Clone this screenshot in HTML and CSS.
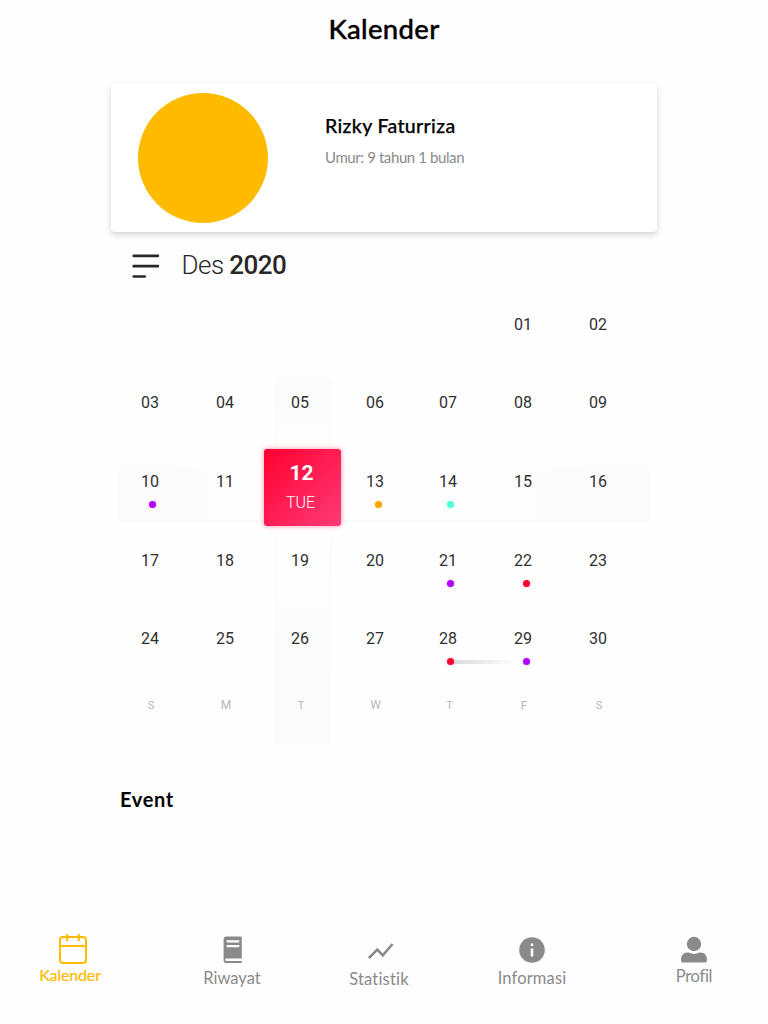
FILE: index.html
```html
<!DOCTYPE html>
<html lang="id">
<head>
<meta charset="utf-8">
<title>Kalender</title>
<link rel="stylesheet" href="styles.css">
</head>
<body>
<div class="app">
  <header class="topbar"><h1 class="title">Kalender</h1></header>
  <main class="content">
    <section class="profile">
      <div class="avatar"></div>
      <div class="person">
        <h2 class="name">Rizky Faturriza</h2>
        <p class="age">Umur: 9 tahun 1 bulan</p>
      </div>
    </section>
    <div class="month">
      <svg class="menu" width="28" height="26" viewBox="0 0 28 26"><path d="M1.700 2.800h24.200M1.700 13.200h24.200M1.700 23.500h11" fill="none" stroke="#282828" stroke-width="2.700" stroke-linecap="round"/></svg>
      <h2 class="month-name">Des <b class="year">2020</b></h2>
    </div>
    <section class="calendar">
      <div class="band band-week"></div>
      <div class="band band-day"></div>
      <div class="day first">01</div><div class="day">02</div>
      <div class="day">03</div><div class="day">04</div><div class="day">05</div><div class="day">06</div><div class="day thu">07</div><div class="day">08</div><div class="day">09</div>
      <div class="day">10<i class="dot purple"></i></div><div class="day">11</div>
      <div class="selected"><b class="selected-date">12</b><span class="selected-name">TUE</span></div>
      <div class="day">13<i class="dot orange"></i></div><div class="day thu">14<i class="dot aqua"></i></div><div class="day">15</div><div class="day">16</div>
      <div class="day">17</div><div class="day">18</div><div class="day">19</div><div class="day">20</div><div class="day thu">21<i class="dot purple"></i></div><div class="day">22<i class="dot red fri"></i></div><div class="day">23</div>
      <div class="day">24</div><div class="day">25</div><div class="day">26</div><div class="day">27</div><div class="day thu">28<i class="dot red range"></i></div><div class="day">29<i class="dot purple fri"></i></div><div class="day">30</div>
      <div class="weekday">S</div><div class="weekday wide">M</div><div class="weekday">T</div><div class="weekday wide">W</div><div class="weekday">T</div><div class="weekday eff">F</div><div class="weekday">S</div>
    </section>
    <h2 class="event">Event</h2>
  </main>
  <nav class="tabs">
    <a class="tab active">
      <svg class="tab-icon" width="30" height="32" viewBox="0 0 30 32" fill="none" stroke="#ffbb00" stroke-width="2"><rect x="2" y="4" width="26" height="26" rx="3"/><path d="M2 13h26M9.200 1v7M20.800 1v7"/></svg>
      <span class="label">Kalender</span>
    </a>
    <a class="tab riwayat">
      <svg class="tab-icon" width="20" height="28" viewBox="0 0 20 28"><path fill="#8a8a8a" fill-rule="evenodd" d="M3 .5h14.800q1 0 1 1v21H3.500q-1.300 0-1.300 1.300t1.300 1.300h15.300v2H3.300Q.6 27.100.6 24.300V3Q.6.5 3 .5ZM3.700 4.300v2.200h12.600V4.300ZM3.700 9v2.200h12.600V9Z"/></svg>
      <span class="label">Riwayat</span>
    </a>
    <a class="tab statistik">
      <svg class="tab-icon" width="28" height="20" viewBox="0 0 28 20"><path d="m1.800 17.200 8.500-8.500 5.500 5.600L25.500 3" fill="none" stroke="#8a8a8a" stroke-width="2.600"/></svg>
      <span class="label">Statistik</span>
    </a>
    <a class="tab informasi">
      <svg class="tab-icon" width="28" height="28" viewBox="0 0 28 28"><circle cx="14" cy="14" r="12.800" fill="#8a8a8a"/><path fill="#fefefe" d="M12.700 7.500h2.600v2.600h-2.600zM12.700 12.600h2.600v7.800h-2.600z"/></svg>
      <span class="label">Informasi</span>
    </a>
    <a class="tab profil">
      <svg class="tab-icon" width="28" height="28" viewBox="0 0 28 28" fill="#8a8a8a"><circle cx="14" cy="8" r="7.200"/><path d="M7.500 16.600h1.200q2.400 1.300 5.300 1.300t5.300-1.300h1.200q6.500.4 6.500 7.400 0 2.600-2.500 2.600h-21Q1 26.600 1 24q0-7 6.500-7.400Z"/></svg>
      <span class="label">Profil</span>
    </a>
  </nav>
</div>
</body>
</html>
```

FILE: styles.css
```css
* { box-sizing: border-box; margin: 0; padding: 0; }
body { background: #fefefe; font-family: Lato, "Open Sans", sans-serif; color: #000; font-variant-ligatures: none; }
.app { width: 768px; height: 1024px; display: flex; flex-direction: column; overflow: hidden; }
.topbar { height: 84px; padding-top: 11px; text-align: center; }
.title { font: 500 27.5px/36px Lato, sans-serif; letter-spacing: .3px; -webkit-text-stroke: .4px #000; }
.content { width: 546px; margin-left: 111px; height: 848px; }
.profile { height: 148px; display: flex; padding: 9px 27px; background: #fff; border-radius: 4px; box-shadow: 0 3px 6px rgba(0,0,0,.16); }
.avatar { width: 130px; height: 130px; border-radius: 50%; background: #ffbb00; }
.person { margin-left: 57px; padding-top: 20px; }
.name { font-size: 19.5px; line-height: 26px; font-weight: 500; letter-spacing: .35px; white-space: nowrap; -webkit-text-stroke: .25px #000; }
.age { margin-top: 8px; font-size: 15px; line-height: 20px; letter-spacing: -.4px; color: #8a8a8a; white-space: nowrap; }
.month { display: flex; height: 55px; padding: 21px 0 0 21px; }
.menu { flex: none; }
.month-name { margin: -5px 0 0 21.500px; font: 300 26px/34px Roboto, sans-serif; letter-spacing: -.55px; color: #282828; white-space: nowrap; }
.year { font-weight: 500; }
.calendar { position: relative; display: grid; width: 524px; margin-left: 1px; grid-template-columns: 75px 75px 75px 74px 74px 75px 75px; grid-template-rows: 78px 79px 79px 78px 79px 80px; font: 400 16px/20px Roboto, sans-serif; color: #303030; }
.band { position: absolute; }
.band-week { left: 9px; top: 180px; width: 526px; height: 53px; background: linear-gradient(90deg, #fbfbfb, #fefefe 35% 58%, #fbfbfb); box-shadow: 0 1px 4px rgba(0,0,0,.035); }
.band-day { left: 164px; top: 92px; width: 54px; height: 366px; background: linear-gradient(#fbfbfb, #fefefe 25% 45%, #fbfbfb 80%); box-shadow: 0 0 4px rgba(0,0,0,.03); }
.day { position: relative; padding: 28px 0 0 29px; }
.thu { padding-left: 28px; }
.first { grid-column: 6; }
.dot { display: block; width: 7px; height: 7px; margin: 9px 0 0 8px; border-radius: 50%; }
.thu .dot { margin-left: 8px; }
.orange, .fri { margin-left: 9px; }
.purple { background: #b000ff; box-shadow: 0 0 3px rgba(176,0,255,.3); }
.orange { background: #ffa500; box-shadow: 0 0 3px rgba(255,165,0,.3); }
.aqua { background: #4fffd5; box-shadow: 0 0 3px rgba(79,255,213,.4); }
.red { background: #ff0030; box-shadow: 0 0 3px rgba(255,0,48,.3); }
.range::after { content: ""; position: absolute; z-index: -1; left: 40px; top: 59px; width: 64px; height: 4px; background: linear-gradient(90deg, #d8d8d8, #fefefe); }
.selected { position: relative; width: 77px; height: 77px; margin: 5px 0 0 2px; padding-top: 10px; display: flex; flex-direction: column; text-align: center; color: #fff; border-radius: 3px; background: linear-gradient(135deg, #ff0030, #ff3b78); box-shadow: 0 0 5px rgba(255,0,60,.45); }
.selected-date { font-size: 21px; line-height: 28px; padding-right: 2px; }
.selected-name { margin-top: 6px; padding-right: 4px; font-size: 16px; font-weight: 300; }
.weekday { position: relative; padding: 16px 0 0 3px; text-align: center; font-size: 11px; color: #b8b8b8; }
.wide { padding-top: 15px; font-size: 12px; }
.eff { font-size: 12px; }
.event { margin: 26px 0 0 9px; font: 700 20px/26px Lato, sans-serif; letter-spacing: .65px; }
.tabs { display: flex; height: 92px; align-items: flex-start; padding-left: 39px; }
.tab { display: flex; flex: none; flex-direction: column; align-items: center; color: #8a8a8a; }
.label { font-size: 16.500px; line-height: 22px; white-space: nowrap; }
.active { width: 62px; color: #ffbb00; padding-top: 1px; }
.active .tab-icon { margin-left: 6px; }
.active .label { font-size: 16px; margin-top: -1px; letter-spacing: -.15px; -webkit-text-stroke: .2px #ffbb00; }
.riwayat { width: 58px; margin-left: 102px; padding-top: 4px; }
.riwayat .tab-icon { margin-left: 2px; }
.riwayat .label { margin-top: 3px; }
.statistik { width: 60px; margin-left: 88px; padding-top: 9px; }
.statistik .tab-icon { margin-left: 4px; }
.statistik .label { margin-top: 7px; letter-spacing: .2px; }
.informasi { width: 70px; margin-left: 88px; padding-top: 4px; }
.informasi .label { margin-top: 3px; letter-spacing: .15px; }
.profil { width: 36px; margin-left: 109px; padding-top: 4px; }
.profil .label { margin-top: 1px; letter-spacing: -.3px; }
```
